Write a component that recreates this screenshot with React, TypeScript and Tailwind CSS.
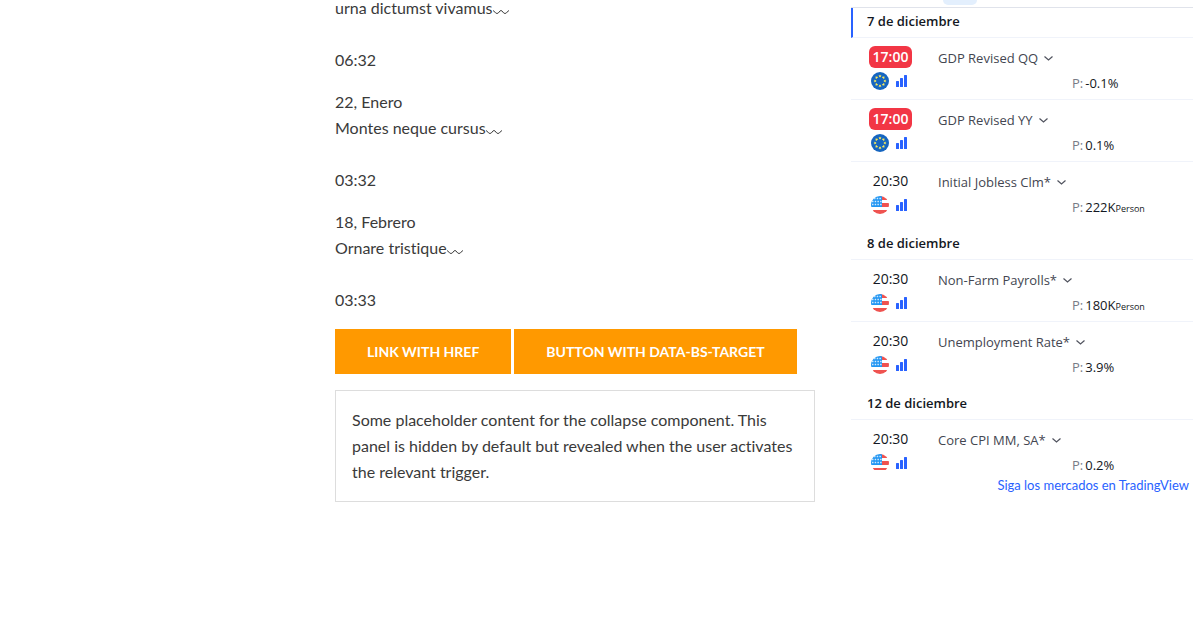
import React from 'react';

type Country = 'eu' | 'us';

interface Talk {
  id: string;
  date?: string;
  title: string;
  time: string;
}

interface EconomicEvent {
  id: string;
  time: string;
  live?: boolean;
  country: Country;
  name: string;
  previous: string;
  unit?: string;
}

interface CalendarDay {
  label: string;
  current?: boolean;
  events: EconomicEvent[];
}

const talks: Talk[] = [
  { id: 'vivamus', title: 'urna dictumst vivamus', time: '06:32' },
  { id: 'montes', date: '22, Enero', title: 'Montes neque cursus', time: '03:32' },
  { id: 'ornare', date: '18, Febrero', title: 'Ornare tristique', time: '03:33' },
];

const days: CalendarDay[] = [
  {
    label: '7 de diciembre',
    current: true,
    events: [
      { id: 'gdp-qq', time: '17:00', live: true, country: 'eu', name: 'GDP Revised QQ', previous: '-0.1%' },
      { id: 'gdp-yy', time: '17:00', live: true, country: 'eu', name: 'GDP Revised YY', previous: '0.1%' },
      { id: 'jobless', time: '20:30', country: 'us', name: 'Initial Jobless Clm*', previous: '222K', unit: 'Person' },
    ],
  },
  {
    label: '8 de diciembre',
    events: [
      { id: 'payrolls', time: '20:30', country: 'us', name: 'Non-Farm Payrolls*', previous: '180K', unit: 'Person' },
      { id: 'unemployment', time: '20:30', country: 'us', name: 'Unemployment Rate*', previous: '3.9%' },
    ],
  },
  {
    label: '12 de diciembre',
    events: [
      { id: 'cpi', time: '20:30', country: 'us', name: 'Core CPI MM, SA*', previous: '0.2%' },
    ],
  },
];

const Squiggle = () => (
  <svg className="inline-block w-4 h-2 align-[-2px]" viewBox="0 0 16 8" fill="none" stroke="#444" aria-hidden="true">
    <path d="M0 2.5C1.2 2.5 2 5.5 4 5.5C6 5.5 6.4 2.5 8 2.5C9.6 2.5 10 5.5 12 5.5C14 5.5 14.8 2.5 16 2.5" />
  </svg>
);

const EuFlag = () => (
  <svg className="size-[18px]" viewBox="0 0 18 18" aria-label="Unión Europea">
    <circle cx="9" cy="9" r="9" fill="#1565c0" />
    <g fill="#ffee58">
      {[0, 45, 90, 135, 180, 225, 270, 315].map(angle => (
        <path
          key={angle}
          d="M9 2.5l.5 1h1.1l-.8.8.3 1.1L9 4.8l-1.1.6.3-1.1-.8-.8h1.1z"
          transform={`rotate(${angle} 9 9)`}
        />
      ))}
    </g>
  </svg>
);

const UsFlag = () => (
  <svg className="size-[18px]" viewBox="0 0 18 18" aria-label="Estados Unidos">
    <clipPath id="us-round">
      <circle cx="9" cy="9" r="9" />
    </clipPath>
    <g clipPath="url(#us-round)">
      <path d="M0 0h18v18H0z" fill="#fff" />
      <path d="M9 0h9v4H9zM9 7h9v4H9zM0 14h18v4H0z" fill="#ef5350" />
      <path d="M0 0h11v11H0z" fill="#2196f3" />
      <path d="M3 2.5h8M1 5.5h10M1 8.5h10" stroke="#fff" strokeDasharray="1.5 1.2" strokeWidth="1.5" opacity=".8" />
    </g>
  </svg>
);

const ImportanceIcon = () => (
  <svg className="w-[11px] h-3" viewBox="0 0 11 12" fill="#2962ff" aria-hidden="true">
    <rect y="6" width="3" height="6" rx=".5" />
    <rect x="4" y="3" width="3" height="9" rx=".5" />
    <rect x="8" width="3" height="12" rx=".5" />
  </svg>
);

const Chevron = () => (
  <svg className="w-[9px] h-[5px]" viewBox="0 0 9 5" fill="none" stroke="#50535e" strokeWidth="1.2" aria-hidden="true">
    <path d="M.5.5l4 3.5 4-3.5" />
  </svg>
);

const EventRow: React.FC<{ event: EconomicEvent }> = ({ event }) => (
  <li className="flex border-b border-[#f0f3fa] last:border-transparent pt-2 pb-[3px] pl-[18px]">
    <div className="w-[69px] shrink-0 space-y-1">
      <div
        className={
          event.live
            ? 'w-[43px] rounded-md bg-[#f23645] text-center text-sm leading-[22px] font-semibold text-white'
            : 'w-[43px] text-center text-sm leading-[22px]'
        }
      >
        {event.time}
      </div>
      <div className="flex items-center gap-[7px] pl-0.5">
        {event.country === 'eu' ? <EuFlag /> : <UsFlag />}
        <ImportanceIcon />
      </div>
    </div>
    <div className="flex-1">
      <button type="button" className="flex items-center gap-1.5 text-[13px] leading-6 text-[#434651]">
        {event.name}
        <Chevron />
      </button>
      <div className="flex items-baseline pl-[134px] text-[13px] leading-[26px]">
        <span className="mr-0.5 text-[#787b86]">P:</span>
        <span>{event.previous}</span>
        {event.unit && <span className="text-[9px] leading-3">{event.unit}</span>}
      </div>
    </div>
  </li>
);

const EconomicCalendar = () => (
  <aside className="w-[342px] shrink-0 font-['Open_Sans','Noto_Sans',sans-serif] text-[#131722]">
    <div className="h-2 border-b border-[#e0e3eb] pl-[92px]">
      <div className="h-[5px] w-[34px] rounded-b-md bg-[#e3effd]" />
    </div>
    <div className="h-[462px] overflow-hidden">
      {days.map(day => (
        <section key={day.label} className="mb-[6px]">
          <h3
            className={
              day.current
                ? 'border-b border-l-2 border-b-[#f0f3fa] border-l-[#2962ff] pl-[14px] pb-[3px] text-[13px] leading-[26px] font-semibold'
                : 'border-b border-[#f0f3fa] pl-4 pb-[3px] text-[13px] leading-[26px] font-semibold'
            }
          >
            {day.label}
          </h3>
          <ul>
            {day.events.map(event => (
              <EventRow key={event.id} event={event} />
            ))}
          </ul>
        </section>
      ))}
    </div>
    <p className="pt-[3px] pr-1 text-right font-[Lato,sans-serif] text-[13px] leading-6">
      <a href="#tradingview" className="text-[#2962ff]">Siga los mercados en TradingView</a>
    </p>
  </aside>
);

export default function App() {
  return (
    <div className="flex gap-9 overflow-hidden bg-white pl-[335px]">
      <main className="min-w-0 flex-1 font-[Lato,sans-serif] text-base leading-[26px] text-[#3a3a3a] [font-variant-ligatures:none]">
        <div className="-mt-[5px] space-y-4">
          {talks.map(talk => (
            <div key={talk.id}>
              {talk.date && <p>{talk.date}</p>}
              <p className="mb-[26px]">
                {talk.title}
                <Squiggle />
              </p>
              <p>{talk.time}</p>
            </div>
          ))}
        </div>
        <div className="mt-4 flex gap-[3px] text-sm leading-[21px] font-bold text-white uppercase">
          <a href="#collapse" className="bg-[#ff9900] px-8 py-3">Link with href</a>
          <button type="button" className="bg-[#ff9900] px-8 py-3 uppercase">Button with data-bs-target</button>
        </div>
        <div id="collapse" className="mt-4 border border-[#dddddd] p-4">
          Some placeholder content for the collapse component. This panel is hidden by default but revealed when the
          user activates the relevant trigger.
        </div>
      </main>
      <EconomicCalendar />
    </div>
  );
}
